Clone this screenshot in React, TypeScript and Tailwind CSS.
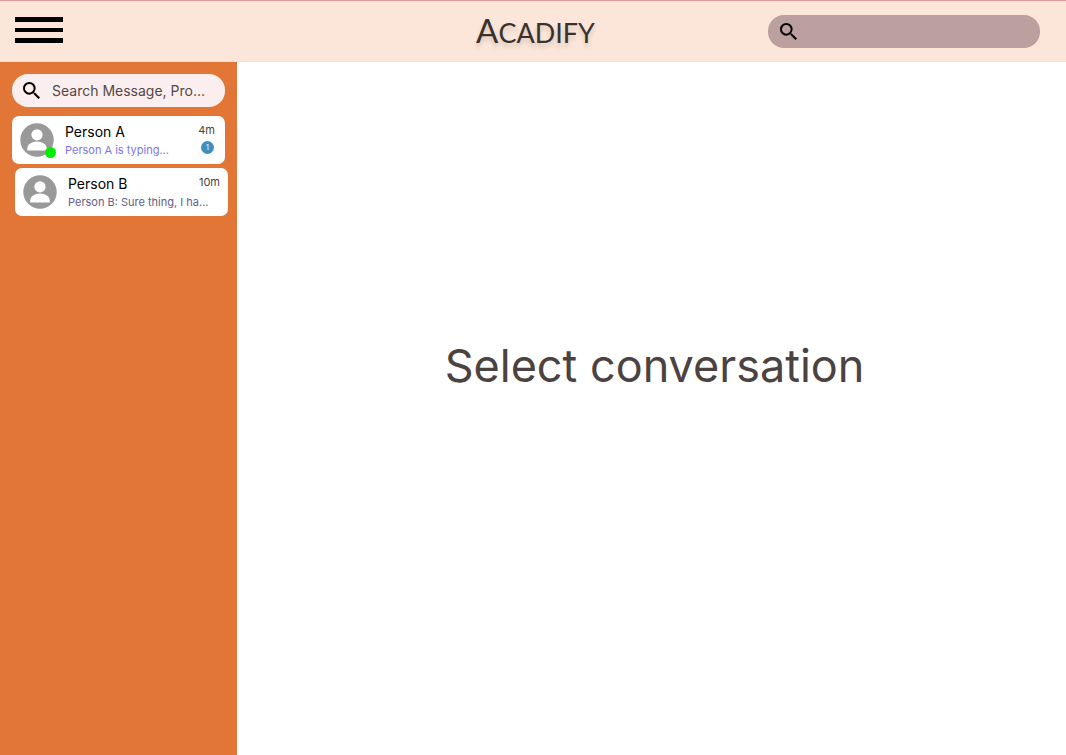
import React from "react";

type Conversation = {
  name: string;
  preview: string;
  time: string;
  unread?: number;
  online?: boolean;
  typing?: boolean;
};

const conversations: Conversation[] = [
  { name: "Person A", preview: "Person A is typing...", time: "4m", unread: 1, online: true, typing: true },
  { name: "Person B", preview: "Person B: Sure thing, I ha...", time: "10m" },
];

function SearchIcon() {
  return (
    <svg viewBox="3 3 17.5 17.5" className="size-[17px] shrink-0" fill="#000" aria-hidden="true">
      <path d="M15.5 14h-.79l-.28-.27A6.47 6.47 0 0 0 16 9.5 6.5 6.5 0 1 0 9.5 16c1.61 0 3.09-.59 4.23-1.57l.27.28v.79l5 4.99L20.49 19l-4.99-5zm-6 0C7.01 14 5 11.99 5 9.5S7.01 5 9.5 5 14 7.01 14 9.5 11.99 14 9.5 14z" />
    </svg>
  );
}

function Avatar({ online }: { online?: boolean }) {
  return (
    <span className="relative size-[34px] shrink-0">
      <svg viewBox="0 0 34 34" className="size-full" aria-hidden="true">
        <circle cx="17" cy="17" r="16.7" fill="#999" />
        <circle cx="17" cy="11.8" r="5.6" fill="#fff" />
        <path d="M7.2 27.4v-1.8c0-4.3 4.5-7.2 9.8-7.2s9.8 2.9 9.8 7.2v1.8z" fill="#fff" />
      </svg>
      {online && <span className="absolute -right-0.5 -bottom-px size-[11px] rounded-full bg-[#00ee00]" />}
    </span>
  );
}

function ConversationCard({ item }: { item: Conversation }) {
  return (
    <button
      type="button"
      className="flex h-12 w-full items-center rounded-[7px] bg-white pr-2 pl-2 text-left"
    >
      <Avatar online={item.online} />
      <span className="ml-[11px] flex min-w-0 flex-1 flex-col pt-0.5">
        <span className="flex items-start justify-between">
          <span className="text-sm leading-[18px] text-black">{item.name}</span>
          <span className={item.unread ? "mr-0.5 text-[11px] leading-[14px] text-[#4a4242]" : "text-[11px] leading-[14px] text-[#4a4242]"}>
            {item.time}
          </span>
        </span>
        <span className="flex items-start justify-between">
          <span
            className={
              item.typing
                ? "text-[11px] leading-[18px] whitespace-nowrap text-[#7b74f2]"
                : "text-[11px] leading-[18px] whitespace-nowrap text-[#626085]"
            }
          >
            {item.preview}
          </span>
          {item.unread && (
            <span className="mr-[3px] flex size-[13px] items-center justify-center rounded-full bg-[#3f90bf] text-[7px] leading-none text-white">
              {item.unread}
            </span>
          )}
        </span>
      </span>
    </button>
  );
}

export default function App() {
  return (
    <div className="flex min-h-screen flex-col bg-white font-['Inter',sans-serif]">
      <header className="grid h-[62px] grid-cols-[1fr_auto_1fr] items-center border-t border-b border-t-[#e39a9e] border-b-[#f8dccd] bg-[#fce6d9] pr-[26px] pl-[15px]">
        <button type="button" aria-label="Open menu" className="flex w-12 flex-col gap-1.5 pb-0.5">
          <span className="h-[5px] w-full bg-black" />
          <span className="h-1 w-full bg-black" />
          <span className="h-[5px] w-full bg-black" />
        </button>
        <h1 className="pl-4 font-['Lato',sans-serif] text-[27px] leading-9 text-[#38322f] [text-shadow:0_4px_4px_rgba(0,0,0,0.15)]">
          <span className="text-[33px]">A</span>CADIFY
        </h1>
        <label className="flex h-[33px] w-[272px] items-center justify-self-end rounded-2xl bg-[#bba09f] pr-4 pl-3">
          <SearchIcon />
          <input type="text" aria-label="Search" className="ml-3 min-w-0 flex-1 bg-transparent text-sm outline-none" />
        </label>
      </header>
      <div className="flex flex-1">
        <aside className="w-[237px] shrink-0 bg-[#e27636] pt-3 pr-[9px] pl-3">
          <label className="mr-[3px] flex h-[33px] items-center rounded-2xl bg-[#fbeeee] pr-3 pl-[11px]">
            <SearchIcon />
            <input
              type="text"
              aria-label="Search messages and profiles"
              placeholder="Search Message, Pro..."
              className="ml-3 min-w-0 flex-1 bg-transparent text-sm outline-none placeholder:text-[#534847]"
            />
          </label>
          <ul className="mt-[9px] flex flex-col gap-1">
            {conversations.map((item) => (
              <li key={item.name} className="w-[213px] last:self-end">
                <ConversationCard item={item} />
              </li>
            ))}
          </ul>
        </aside>
        <main className="flex flex-1 items-center justify-center pb-[86px] pl-1.5">
          <p className="text-[45px] leading-[56px] text-[#4b4241]">Select conversation</p>
        </main>
      </div>
    </div>
  );
}
